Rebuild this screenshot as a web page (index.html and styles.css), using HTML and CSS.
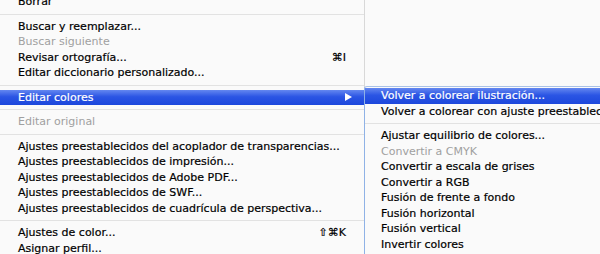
FILE: index.html
```html
<!DOCTYPE html>
<html>
<head>
	<title>Edición - menú</title>
	<link rel="stylesheet" href="styles.css">
</head>
<body>
	<div class="menus">

		<ul class="menu">
			<li class="item">Borrar</li>
			<li class="sep"></li>
			<li class="item">Buscar y reemplazar...</li>
			<li class="item off">Buscar siguiente</li>
			<li class="item">Revisar ortografía... <span class="key">⌘I</span></li>
			<li class="item">Editar diccionario personalizado...</li>
			<li class="sep"></li>
			<li class="item on">Editar colores
				<svg class="arrow" width="7" height="8" viewBox="0 0 7 8"><polygon points="0,0 7,4 0,8" fill="#fff"/></svg>
			</li>
			<li class="sep"></li>
			<li class="item off">Editar original</li>
			<li class="sep"></li>
			<li class="item">Ajustes preestablecidos del acoplador de transparencias...</li>
			<li class="item">Ajustes preestablecidos de impresión...</li>
			<li class="item">Ajustes preestablecidos de Adobe PDF...</li>
			<li class="item">Ajustes preestablecidos de SWF...</li>
			<li class="item">Ajustes preestablecidos de cuadrícula de perspectiva...</li>
			<li class="sep"></li>
			<li class="item">Ajustes de color... <span class="key">⇧⌘K</span></li>
			<li class="item">Asignar perfil...</li>
		</ul>

		<!-- submenú de Editar colores -->
		<ul class="menu sub">
			<li class="item on">Volver a colorear ilustración...</li>
			<li class="item">Volver a colorear con ajuste preestablecido</li>
			<li class="sep"></li>
			<li class="item">Ajustar equilibrio de colores...</li>
			<li class="item off">Convertir a CMYK</li>
			<li class="item">Convertir a escala de grises</li>
			<li class="item">Convertir a RGB</li>
			<li class="item">Fusión de frente a fondo</li>
			<li class="item">Fusión horizontal</li>
			<li class="item">Fusión vertical</li>
			<li class="item">Invertir colores</li>
		</ul>

	</div>
</body>
</html>
```

FILE: styles.css
```css
body {
	margin: 0;
	background-color: #fafafa;
	font-family: "DejaVu Sans", sans-serif;
	font-size: 11px;
	color: #000;
	overflow: hidden;
}

.menus {
	display: flex;
	align-items: flex-start;
	height: 254px;
	overflow: hidden;
}

.menu {
	list-style: none;
	margin: 0;
	padding: 0;
	background-color: #fafafa;
}

.menus > .menu:first-child {
	width: 364px;
	flex: none;
	margin-top: -6px;
	border-right: 1px solid #d8d8d8;
	height: 270px;
}

.item {
	display: flex;
	align-items: center;
	height: 15.5px;
	padding-left: 18px;
	padding-right: 18px;
	white-space: nowrap;
	-webkit-text-stroke: 0.2px #000;
}

.item.off {
	color: #a0a0a0;
	-webkit-text-stroke: 0;
}

.item.on {
	color: #fff;
	-webkit-text-stroke: 0.2px #fff;
	background: linear-gradient(#6487f0, #2b55e4 45%, #1c47dc);
}

.key {
	margin-left: auto;
}

.arrow {
	margin-left: auto;
	margin-right: -6px;
}

.sep {
	height: 9px;
	display: flex;
	align-items: center;
}

.sep::after {
	content: "";
	flex: 1;
	height: 1px;
	background-color: #e2e2e2;
}

.sub {
	flex: 1;
	margin-top: 86px;
	margin-left: -1px;
	padding-top: 1px;
	height: 180px;
	border-top: 1px solid #a9c2e8;
	border-left: 1px solid #8fb2e6;
	border-top-left-radius: 3px;
}

.sub .item {
	padding-left: 16px;
}
```
